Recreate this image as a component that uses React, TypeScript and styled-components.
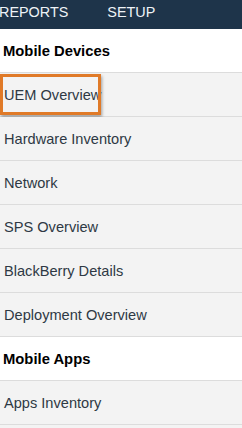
import styled, { createGlobalStyle } from "styled-components";

const GlobalStyle = createGlobalStyle`
    html, body {
        margin: 0;
        padding: 0;
        background: #f3f3f3;
        font-family: "Liberation Sans", Arial, sans-serif;
    }
`;

const Page = styled.div`
    width: 242px;
    height: 428px;
    overflow: hidden;
    display: flex;
    flex-direction: column;
`;

const TopBar = styled.nav`
    height: 29px;
    background: #1e344a;
    display: flex;
    align-items: center;
    gap: 39px;
    margin-left: -1px;
    color: #eef3f7;
    font-size: 14.4px;
    flex-shrink: 0;
`;

const TopLink = styled.span`
    line-height: 1;
    margin-top: -5px;
`;

const Menu = styled.ul`
    list-style: none;
    margin: 0;
    padding: 0;
`;

const Row = styled.li<{ $section?: boolean }>`
    position: relative;
    height: 43px;
    display: flex;
    align-items: center;
    padding-left: ${(p) => (p.$section ? "3px" : "4px")};
    border-bottom: 1px solid #dcdcdc;
    background: ${(p) => (p.$section ? "#ffffff" : "#f3f3f3")};
    color: ${(p) => (p.$section ? "#000000" : "#2e3944")};
    font-size: ${(p) => (p.$section ? "14.8px" : "14.6px")};
    font-weight: ${(p) => (p.$section ? "bold" : "normal")};
`;

const Highlight = styled.span`
    position: absolute;
    left: 0;
    top: 1px;
    width: 101px;
    height: 41px;
    box-sizing: border-box;
    border: 3px solid #e07a28;
    box-shadow: 1px 2px 3px rgba(0, 0, 0, 0.35);
    pointer-events: none;
`;

type Item = { label: string; section?: boolean; highlighted?: boolean };

const items: Item[] = [
    { label: "Mobile Devices", section: true },
    { label: "UEM Overview", highlighted: true },
    { label: "Hardware Inventory" },
    { label: "Network" },
    { label: "SPS Overview" },
    { label: "BlackBerry Details" },
    { label: "Deployment Overview" },
    { label: "Mobile Apps", section: true },
    { label: "Apps Inventory" },
];

export default function App() {
    return (
        <Page>
            <GlobalStyle />
            <TopBar>
                <TopLink>REPORTS</TopLink>
                <TopLink>SETUP</TopLink>
            </TopBar>
            <Menu>
                {items.map((item) => (
                    <Row key={item.label} $section={item.section}>
                        {item.label}
                        {item.highlighted && <Highlight />}
                    </Row>
                ))}
            </Menu>
        </Page>
    );
}
